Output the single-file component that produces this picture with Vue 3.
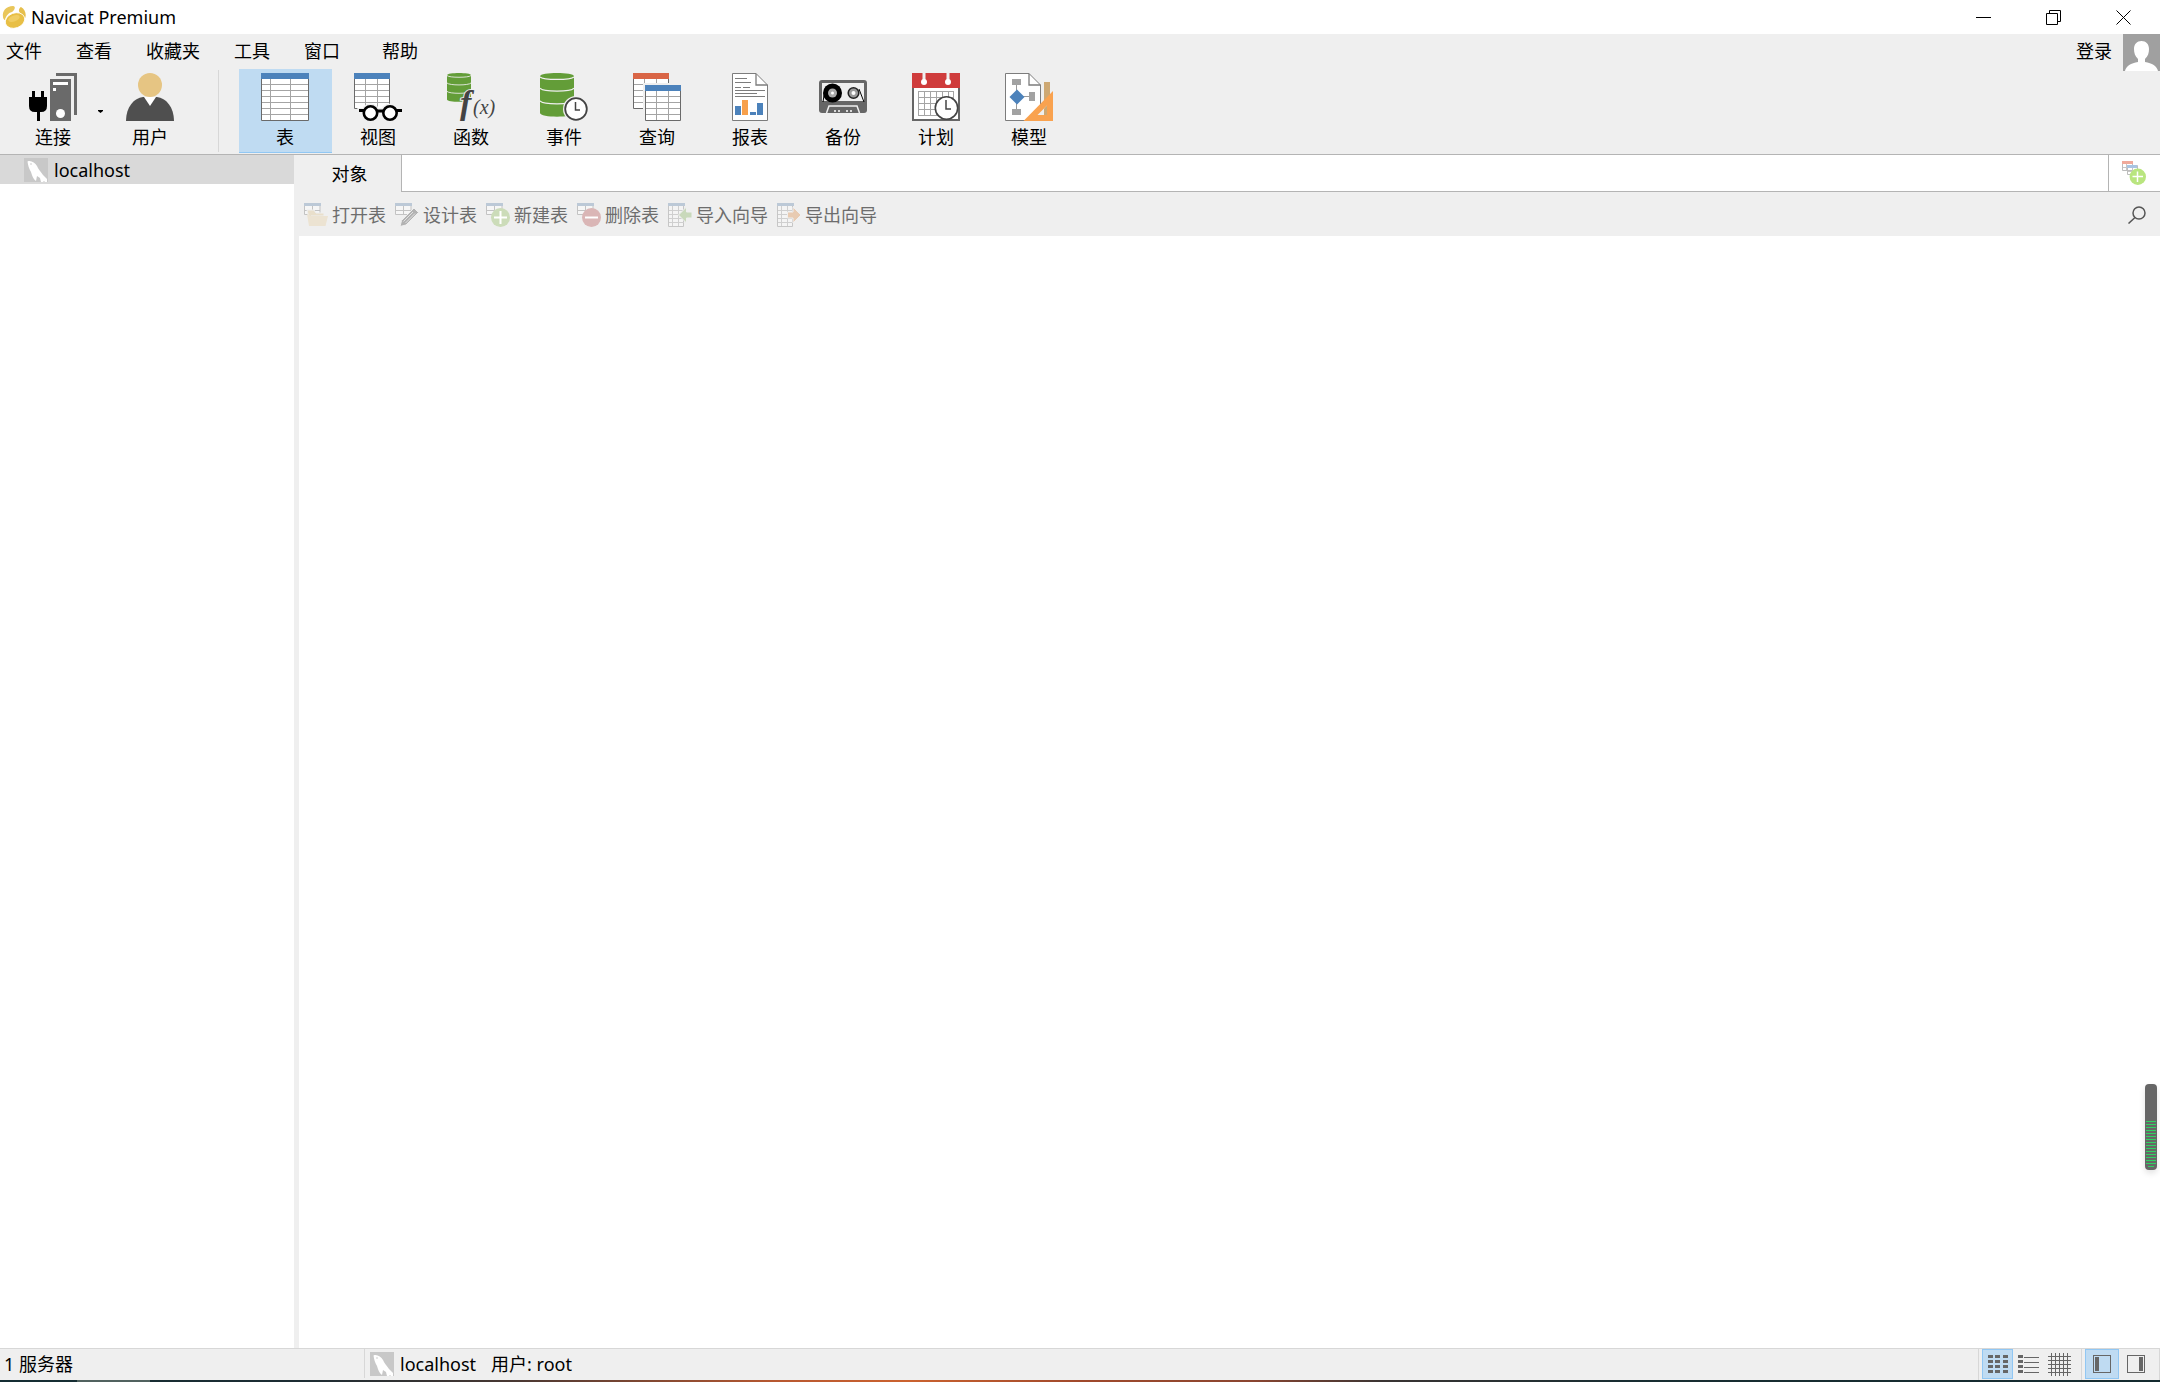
<template>
  <div class="window">
    <!-- 图标定义 -->
    <svg class="icon-defs" aria-hidden="true">
      <symbol id="logo" viewBox="0 0 24 24">
        <path d="M1 12C0 6 4 1 11 1c3 0 2 4-1 6-4 1-6 4-7 8C2 15 1 13 1 12z" fill="#e9c65a" />
        <path d="M18 8c-2-2-1-5 1-6 5 3 6 9 3 13-1-3-2-6-4-7z" fill="#e6bf4c" />
        <ellipse cx="13" cy="15.500" rx="10" ry="7.500" transform="rotate(-20 13 15.500)" fill="#e8bf45" stroke="#fff" stroke-width=".8" />
        <ellipse cx="12" cy="13.500" rx="6" ry="3" transform="rotate(-20 12 13.500)" fill="#f0cd63" />
      </symbol>
      <symbol id="connect" viewBox="0 0 48 48">
        <path d="M27 0h21v42h-3V3H27z" fill="#6a6a6a" />
        <path d="M21 6h21v42H21z" fill="#6a6a6a" />
        <path d="M24 9h15v3H24zM24 15h3v3h-3z" fill="#fff" />
        <circle cx="31.500" cy="40.500" r="4.500" fill="#fff" />
        <path d="M3 18h3v6h6v-6h3v6h3v9q0 6-6 6h-1v9H8v-9H6q-6 0-6-6v-9h3z" fill="#000" />
      </symbol>
      <symbol id="user" viewBox="0 0 48 48">
        <path d="M0 48C0 34 8 25 17 24h14c9 1 17 10 17 24z" fill="#4f4f4f" />
        <path d="M18 24h12l-6 9z" fill="#fff" />
        <circle cx="24" cy="12" r="12" fill="#e6c583" />
      </symbol>
      <symbol id="table" viewBox="0 0 48 48">
        <path d="M.5.5h47v47H.5z" fill="#fff" stroke="#6a6a6a" />
        <path d="M1 11.500h46M1 17.500h46M1 23.500h46M1 29.500h46M1 35.500h46M1 41.500h46M9.500 6v41M29.500 6v41" stroke="#a4a4a4" />
        <path d="M0 0h48v6H0z" fill="#4c82bb" />
      </symbol>
      <symbol id="sheet" viewBox="0 0 36 36">
        <path d="M.5.5h35v35H.5z" fill="#fff" stroke="#6a6a6a" />
        <path d="M1 11.500h34M1 17.500h34M1 23.500h34M1 29.500h34M11.500 6v29M23.500 6v29" stroke="#a4a4a4" />
        <path d="M0 0h36v6H0z" fill="currentColor" />
      </symbol>
      <symbol id="view" viewBox="0 0 48 48">
        <use href="#sheet" width="36" height="36" color="#4c82bb" />
        <path d="M3 35h45v7H8z" fill="#efefef" />
        <circle cx="16.500" cy="40" r="9.500" fill="#efefef" />
        <circle cx="36" cy="40" r="9.500" fill="#efefef" />
        <path d="M5 37.500h7M22 38h9M40 37.500h8" stroke="#000" stroke-width="3" />
        <circle cx="16.500" cy="40" r="6.700" fill="#fff" stroke="#000" stroke-width="2.600" />
        <circle cx="36" cy="40" r="6.700" fill="#fff" stroke="#000" stroke-width="2.600" />
      </symbol>
      <symbol id="database" viewBox="0 0 36 45" preserveAspectRatio="none">
        <path d="M0 3.500C0-1 36-1 36 3.500V41c0 5-36 5-36 0z" fill="#639d38" />
        <path d="M0 4c3 3.500 33 3.500 36 0M0 15.500c3 4 33 4 36 0M0 28.500c3 4 33 4 36 0" fill="none" stroke="#efefef" stroke-width="1.300" />
      </symbol>
      <symbol id="function" viewBox="0 0 48 48">
        <use href="#database" width="24" height="29" />
      </symbol>
      <symbol id="clock" viewBox="0 0 26 26">
        <circle cx="13" cy="13" r="13" fill="#efefef" />
        <circle cx="13" cy="13" r="10.800" fill="#fff" stroke="#444" stroke-width="1.800" />
        <path d="M12.500 6v8H17" fill="none" stroke="#444" stroke-width="1.500" />
      </symbol>
      <symbol id="event" viewBox="0 0 48 48">
        <use href="#database" width="34" height="44" />
        <use href="#clock" x="23" y="23" width="26" height="26" />
      </symbol>
      <symbol id="query" viewBox="0 0 48 48">
        <use href="#sheet" width="36" height="36" color="#d96546" />
        <path d="M10 10h38v38H10z" fill="#efefef" />
        <use href="#sheet" x="12" y="12" width="36" height="36" color="#4c82bb" />
      </symbol>
      <symbol id="report" viewBox="0 0 48 48">
        <path d="M6.500.5H30L41.500 12v35.500h-35z" fill="#fff" stroke="#7c7c7c" />
        <path d="M30 .5V12h11.500" fill="none" stroke="#7c7c7c" stroke-width="1.300" />
        <path d="M9 5.500h12M9 9.500h16M9 14.500h6M17 14.500h7M9 17.500h30M9 20.500h22M9 23.500h30" stroke="#7c7c7c" />
        <path d="M9 33h6v9H9zM24 39h6v3h-6zM31 30h6v12h-6z" fill="#4c82bb" />
        <path d="M16 27h6v15h-6z" fill="#f7a04c" />
      </symbol>
      <symbol id="backup" viewBox="0 0 48 48">
        <rect y="7" width="48" height="33" rx="3" fill="#666" />
        <path d="M3 10h42v18H3z" fill="#efefef" />
        <path d="M4 29L6 16M45 29l-5-13" stroke="#000" />
        <circle cx="13.500" cy="20" r="9.500" fill="#000" />
        <circle cx="13.500" cy="20" r="4.500" fill="#aaa" />
        <circle cx="13.500" cy="20" r="1.500" fill="#fff" />
        <circle cx="34.500" cy="20" r="5.300" fill="#999" stroke="#222" stroke-width="1.500" />
        <circle cx="34.500" cy="20" r="2" fill="#fff" />
        <path d="M7.500 40l2.500-7h28l2.500 7" fill="none" stroke="#efefef" stroke-width="1.500" />
        <path d="M15 38h2M19 38h2M27 38h2M31 38h2" stroke="#fff" stroke-width="1.500" />
      </symbol>
      <symbol id="schedule" viewBox="0 0 48 48">
        <path d="M1 1h46v46H1z" fill="#fff" stroke="#666" stroke-width="2" />
        <path d="M0 0h48v15H0z" fill="#cf3c3c" />
        <path d="M12 0v8M36 0v8" stroke="#efefef" stroke-width="3" />
        <circle cx="12" cy="9" r="3" fill="#fff" />
        <circle cx="36" cy="9" r="3" fill="#fff" />
        <path d="M7 18.500h35M7 24.500h35M7 30.500h35M7 36.500h35M7 42.500h35M6.500 18v25M12.500 18v25M18.500 18v25M24.500 18v25M30.500 18v25M36.500 18v25M41.500 18v25" stroke="#a4a4a4" />
        <circle cx="34.500" cy="35" r="11.200" fill="#fff" stroke="#444" stroke-width="1.600" />
        <path d="M34 27v9h5" fill="none" stroke="#444" stroke-width="1.500" />
      </symbol>
      <symbol id="model" viewBox="0 0 48 48">
        <path d="M.5.5H24L35.500 12v35.500H.5z" fill="#fff" stroke="#7c7c7c" />
        <path d="M24 .5V12h11.500" fill="none" stroke="#7c7c7c" stroke-width="1.300" />
        <path d="M11.500 12v24M18 23.500h7" stroke="#999" />
        <path d="M7 6h9v6H7zM24 19h6v9h-6zM7 36h9v6H7z" fill="#a2a2a2" />
        <path d="M12 16.500l7.500 7.500-7.500 7.500L4.500 24z" fill="#4c82bb" />
        <path d="M39 9h6v20h-6z" fill="#cda873" />
        <path d="M18.500 48L48 18v30z" fill="#f9a24f" />
        <path d="M32.500 42L42 32.500V42z" fill="#efefef" />
        <path d="M39 35.500l3-3V42h-3z" fill="#cda873" />
      </symbol>
      <symbol id="dolphin" viewBox="0 0 24 24">
        <path d="M0 0h24v24H0z" fill="#c8c8c8" />
        <path d="M3.500 3.500C7 2 11 5 13 8c1 3 4 6 6 9l4 4v3h-2l-1-1-1 1h-2l-1-4-3-2-1 5c-3-2-4-6-5-9C5 11 4 7 3.500 3.500z" fill="#fff" />
        <circle cx="7" cy="6" r=".8" fill="#c8c8c8" />
      </symbol>
      <symbol id="mini-table" viewBox="0 0 24 24">
        <path d="M.5.5h15.500v11H.5z" fill="#f6f6f6" stroke="#c3c3c3" />
        <path d="M8.500 3v8M1 7.500h15" stroke="#c3c3c3" />
        <path d="M0 0h17v3H0z" fill="#bcc9d7" />
      </symbol>
      <symbol id="open" viewBox="0 0 24 24">
        <use href="#mini-table" width="24" height="24" />
        <path d="M3 7h7l2 3h8v3H7l-1 6z" fill="#e9dfcb" stroke="#efefef" />
        <path d="M7 13h17l-2.500 10H5L3 11z" fill="#ece3d2" />
      </symbol>
      <symbol id="design" viewBox="0 0 24 24">
        <use href="#mini-table" width="24" height="24" />
        <path d="M5 23.500l1.500-6L19 5l4.500 4.500L11 22z" fill="#b2b2b2" stroke="#efefef" />
        <path d="M8.500 18.500L18 9M10.500 20L20 10.500" stroke="#e2e2e2" />
      </symbol>
      <symbol id="create" viewBox="0 0 24 24">
        <use href="#mini-table" width="24" height="24" />
        <circle cx="14.500" cy="14.500" r="9.500" fill="#ccdcb9" />
        <path d="M8 14.500h13M14.500 8v13" stroke="#fff" stroke-width="2" />
      </symbol>
      <symbol id="remove" viewBox="0 0 24 24">
        <use href="#mini-table" width="24" height="24" />
        <circle cx="14.500" cy="14.500" r="9.500" fill="#dab6b6" />
        <path d="M8 14.500h13" stroke="#fff" stroke-width="2" />
      </symbol>
      <symbol id="tall-table" viewBox="0 0 24 24">
        <path d="M.5.5h15v23H.5z" fill="#f4f4f4" stroke="#c6c6c6" />
        <path d="M4.500 3v20M10.500 3v20M1 7.500h15M1 11.500h15M1 15.500h15M1 19.500h15" stroke="#cfcfcf" />
        <path d="M0 0h17v3H0z" fill="#bcc9d7" />
      </symbol>
      <symbol id="import" viewBox="0 0 24 24">
        <use href="#tall-table" width="24" height="24" />
        <path d="M10.500 12l8-8v5H24v6h-5.500v5z" fill="#c9d9bb" stroke="#efefef" />
      </symbol>
      <symbol id="export" viewBox="0 0 24 24">
        <use href="#tall-table" width="24" height="24" />
        <path d="M24 12l-8-8v5h-5.500v6H16v5z" fill="#e8cbb2" stroke="#efefef" />
      </symbol>
      <symbol id="new-query" viewBox="0 0 24 24">
        <path d="M.5.5h10v9H.5zM5.500 4.500h10v9h-10z" fill="#fff" stroke="#bdbdbd" />
        <path d="M1 6.500h9M4.500 3v6M6 10.500h9M10.500 7v6" stroke="#c6c6c6" />
        <path d="M0 0h11v3H0z" fill="#f0aa9b" />
        <path d="M5 4h10v3H5z" fill="#a9c4e2" />
        <circle cx="15.800" cy="15.800" r="8.200" fill="#b9e57f" />
        <path d="M10.500 15.500h10.500M15.500 10.500V21" stroke="#fff" stroke-width="1.500" />
      </symbol>
    </svg>

    <header class="titlebar">
      <svg class="logo"><use href="#logo" /></svg>
      <h1 class="title">Navicat Premium</h1>
      <button class="win-btn" aria-label="最小化">
        <svg viewBox="0 0 15 15"><path d="M0 7.500h15" /></svg>
      </button>
      <button class="win-btn" aria-label="还原">
        <svg viewBox="0 0 15 15"><path d="M.5 3.500h11v11H.5zM3.500 3V.5h11v11H12" /></svg>
      </button>
      <button class="win-btn" aria-label="关闭">
        <svg viewBox="0 0 15 15"><path d="M.5.5l14 14M14.500.5l-14 14" /></svg>
      </button>
    </header>

    <nav class="menubar">
      <button v-for="item in menus" :key="item" class="menu-item">{{ item }}</button>
      <button class="login">登录</button>
      <svg class="avatar" viewBox="0 0 37 37">
        <path d="M0 0h37v37H0z" fill="#a0a0a0" />
        <path d="M2 37c1-5 6-8 13-9v-3c-3-3-4-6-4-10 0-5 3-8 7.500-8S26 10 26 15c0 4-1 7-4 10v3c7 1 12 4 13 9z" fill="#fff" />
      </svg>
    </nav>

    <div class="toolbar">
      <button class="tool connect">
        <svg class="tool-icon"><use href="#connect" /></svg>
        <span>连接</span>
      </button>
      <button class="drop" aria-label="连接类型">
        <svg viewBox="0 0 5 3"><path d="M0 0h5v1L2.500 3 0 1z" /></svg>
      </button>
      <button class="tool">
        <svg class="tool-icon"><use href="#user" /></svg>
        <span>用户</span>
      </button>
      <div class="divider"></div>
      <button
        v-for="tool in tools"
        :key="tool.icon"
        class="tool"
        :class="{ active: activeTool === tool.icon }"
        @click="activeTool = tool.icon"
      >
        <svg class="tool-icon">
          <use :href="'#' + tool.icon" />
          <text v-if="tool.icon === 'function'" class="formula" x="13" y="41">
            <tspan class="formula-f">f</tspan><tspan x="26">(x)</tspan>
          </text>
        </svg>
        <span>{{ tool.label }}</span>
      </button>
    </div>

    <div class="body">
      <aside class="sidebar">
        <button class="connection">
          <svg class="icon"><use href="#dolphin" /></svg>
          <span>localhost</span>
        </button>
      </aside>

      <main class="main">
        <div class="tabs">
          <button class="tab">对象</button>
          <div class="tab-space"></div>
          <button class="new-tab" aria-label="新建查询">
            <svg class="icon"><use href="#new-query" /></svg>
          </button>
        </div>
        <div class="actions">
          <button v-for="action in actions" :key="action.icon" class="action" disabled>
            <svg class="icon"><use :href="'#' + action.icon" /></svg>
            <span>{{ action.label }}</span>
          </button>
          <button class="search" aria-label="搜索">
            <svg viewBox="0 0 18 18"><circle cx="11" cy="7" r="6" /><path d="M7 11.500L.5 17.500" /></svg>
          </button>
        </div>
        <div class="content">
          <!-- 内存占用指示 -->
          <div class="gauge">
            <i v-for="n in 16" :key="n" class="gauge-line"></i>
          </div>
        </div>
      </main>
    </div>

    <footer class="statusbar">
      <span class="server-count">1 服务器</span>
      <div class="session">
        <svg class="icon"><use href="#dolphin" /></svg>
        <span class="host">localhost</span>
        <span>用户: root</span>
      </div>
      <div class="modes">
        <button class="mode active" aria-label="列表">
          <svg width="20" height="18" viewBox="0 0 20 18">
            <path d="M0 0h5v3H0zM7 0h5v3H7zM15 0h5v3h-5zM0 5h5v3H0zM7 5h5v3H7zM15 5h5v3h-5zM0 10h5v3H0zM7 10h5v3H7zM15 10h5v3h-5zM0 15h5v3H0zM7 15h5v3H7zM15 15h5v3h-5z" />
          </svg>
        </button>
        <button class="mode" aria-label="详细信息">
          <svg width="21" height="18" viewBox="0 0 21 18">
            <path d="M0 0h5v3H0zM0 5h5v3H0zM0 10h5v3H0zM0 15h5v3H0zM6 2h15v1H6zM6 7h15v1H6zM6 12h15v1H6zM6 17h15v1H6z" />
          </svg>
        </button>
        <button class="mode" aria-label="ER 图表">
          <svg width="23" height="23" viewBox="0 0 23 23">
            <path d="M3 0h1v23H3zM7 0h1v23H7zM11 0h1v23h-1zM15 0h1v23h-1zM19 0h1v23h-1zM0 3h23v1H0zM0 7h23v1H0zM0 11h23v1H0zM0 15h23v1H0zM0 19h23v1H0z" />
          </svg>
        </button>
      </div>
      <div class="modes panes">
        <button class="mode pane active" aria-label="左侧窗格">
          <svg width="18" height="18" viewBox="0 0 18 18">
            <path d="M0 0h18v18H0zM1 1v16h16V1z" fill-rule="evenodd" />
            <path d="M2 2h4v14H2z" />
          </svg>
        </button>
        <button class="mode pane" aria-label="右侧窗格">
          <svg width="18" height="18" viewBox="0 0 18 18">
            <path d="M0 0h18v18H0zM1 1v16h16V1z" fill-rule="evenodd" />
            <path d="M12 2h4v14h-4z" />
          </svg>
        </button>
      </div>
    </footer>
    <div class="desktop-edge"></div>
  </div>
</template>

<script setup>
import { ref } from 'vue'

const menus = ['文件', '查看', '收藏夹', '工具', '窗口', '帮助']

const activeTool = ref('table')

const tools = [
  { icon: 'table', label: '表' },
  { icon: 'view', label: '视图' },
  { icon: 'function', label: '函数' },
  { icon: 'event', label: '事件' },
  { icon: 'query', label: '查询' },
  { icon: 'report', label: '报表' },
  { icon: 'backup', label: '备份' },
  { icon: 'schedule', label: '计划' },
  { icon: 'model', label: '模型' }
]

const actions = [
  { icon: 'open', label: '打开表' },
  { icon: 'design', label: '设计表' },
  { icon: 'create', label: '新建表' },
  { icon: 'remove', label: '删除表' },
  { icon: 'import', label: '导入向导' },
  { icon: 'export', label: '导出向导' }
]
</script>

<style>
body {
  background: #fff;
}
</style>

<style scoped>
.window {
  display: flex;
  flex-direction: column;
  height: 100vh;
  overflow: hidden;
  background: #efefef;
  color: #000;
  font-family: 'Noto Sans', 'Noto Sans CJK SC', sans-serif;
  font-size: 18px;
  line-height: 24px;
}

.window * {
  box-sizing: border-box;
}

button {
  margin: 0;
  padding: 0;
  border: none;
  background: none;
  color: inherit;
  font: inherit;
  white-space: nowrap;
}

svg {
  display: block;
  flex: none;
}

.icon-defs {
  position: absolute;
  width: 0;
  height: 0;
}

.icon {
  width: 24px;
  height: 24px;
}

/* 标题栏 */
.titlebar {
  display: flex;
  align-items: center;
  flex: none;
  height: 34px;
  padding: 0 2px;
  background: #fff;
}

.logo {
  width: 24px;
  height: 24px;
}

.title {
  flex: 1;
  margin: 0 0 0 5px;
  font-size: 18px;
  font-weight: 400;
}

.win-btn {
  display: flex;
  align-items: center;
  justify-content: center;
  width: 70px;
  height: 34px;
}

.win-btn svg {
  width: 15px;
  height: 15px;
  fill: none;
  stroke: #000;
}

/* 菜单栏 */
.menubar {
  display: flex;
  align-items: flex-start;
  flex: none;
  gap: 34px;
  height: 35px;
  padding-left: 6px;
}

.menu-item,
.login {
  height: 34px;
}

.menu-item:nth-child(6) {
  margin-left: 8px;
}

.login {
  margin-left: auto;
}

.avatar {
  width: 37px;
  height: 37px;
  margin-left: -23px;
}

/* 主工具栏 */
.toolbar {
  display: flex;
  flex: none;
  height: 86px;
  padding-left: 10px;
  border-bottom: 1px solid #b4b4b4;
}

.tool {
  display: flex;
  flex-direction: column;
  align-items: center;
  gap: 4px;
  width: 93px;
  height: 84px;
  padding: 4px 1px 0 0;
}

.tool.connect {
  width: 87px;
}

.tool.active {
  background: #bfdbf2;
  border-bottom: 1px solid #91c7f3;
}

.tool-icon {
  width: 48px;
  height: 48px;
}

.formula {
  fill: #444;
  stroke: #efefef;
  stroke-width: 2px;
  paint-order: stroke;
  font-family: 'Liberation Serif', serif;
  font-size: 20px;
  font-style: italic;
}

.formula-f {
  font-size: 34px;
  font-weight: 700;
}

.drop {
  display: flex;
  align-items: center;
  justify-content: center;
  width: 7px;
  height: 84px;
}

.drop svg {
  width: 5px;
  height: 3px;
}

.divider {
  width: 1px;
  height: 82px;
  margin: 1px 20px 0 21px;
  background: #d7d7d7;
}

/* 主体 */
.body {
  display: flex;
  flex: 1;
  min-height: 0;
}

.sidebar {
  flex: none;
  width: 294px;
  background: #fff;
}

.connection {
  display: flex;
  align-items: center;
  gap: 6px;
  width: 100%;
  height: 29px;
  padding-left: 24px;
  background: #d9d9d9;
  line-height: 22px;
}

.main {
  display: flex;
  flex-direction: column;
  flex: 1;
  min-width: 0;
}

.tabs {
  display: flex;
  height: 37px;
}

.tab {
  width: 108px;
  padding-left: 4px;
  border-right: 1px solid #b4b4b4;
}

.tab-space {
  flex: 1;
  background: #fff;
  border-bottom: 1px solid #b4b4b4;
}

.new-tab {
  display: flex;
  align-items: center;
  width: 52px;
  padding-left: 13px;
  background: #fff;
  border-left: 1px solid #b4b4b4;
  border-bottom: 1px solid #b4b4b4;
}

.actions {
  display: flex;
  align-items: center;
  gap: 9px;
  height: 44px;
  padding: 2px 14px 0 10px;
}

.action {
  display: flex;
  align-items: center;
  gap: 4px;
  color: #6d6d6d;
}

.search {
  margin-left: auto;
}

.search svg {
  width: 18px;
  height: 18px;
  fill: none;
  stroke: #555;
  stroke-width: 1.5;
}

.content {
  position: relative;
  flex: 1;
  margin-left: 5px;
  background: #fff;
}

.gauge {
  position: absolute;
  right: 3px;
  bottom: 178px;
  display: flex;
  flex-direction: column;
  justify-content: flex-end;
  gap: 2px;
  width: 12px;
  height: 86px;
  padding: 0 1px 3px;
  border-radius: 4px;
  background: #666;
  box-shadow: 0 3px 6px rgba(0, 0, 0, 0.12);
}

.gauge-line {
  height: 1px;
  background: #2fd162;
}

.gauge-line:last-child {
  margin: 0 2px;
}

/* 状态栏 */
.statusbar {
  display: flex;
  flex: none;
  height: 32px;
  border-top: 1px solid #d7d7d7;
  line-height: 30px;
}

.server-count {
  width: 364px;
  padding-left: 4px;
}

.session {
  display: flex;
  align-items: center;
  flex: 1;
  height: 29px;
  padding-left: 5px;
  border-left: 1px solid #d7d7d7;
}

.host {
  margin: 0 15px 0 6px;
}

.modes {
  display: flex;
  padding: 0 6px 0 3px;
  border-left: 1px solid #d7d7d7;
}

.mode {
  display: flex;
  align-items: center;
  justify-content: center;
  width: 31px;
  height: 30px;
  border: 1px solid transparent;
}

.mode svg {
  fill: #666;
}

.mode.pane {
  width: 34px;
}

.mode.active {
  background: #bfdbf2;
  border-color: #91c7f3;
}

.panes {
  border-right: 1px solid #d7d7d7;
}

.desktop-edge {
  flex: none;
  height: 2px;
  background:
    linear-gradient(#51625f, #51625f) 77px 0 / 73px 2px no-repeat,
    linear-gradient(90deg, #142d33 0%, #1c2c32 14%, #4a3833 24%, #b85830 36%, #cb622f 42%, #a0492b 50%, #8a4530 58%, #3a3433 64%, #182d31 75%, #142a2f 100%);
}
</style>
